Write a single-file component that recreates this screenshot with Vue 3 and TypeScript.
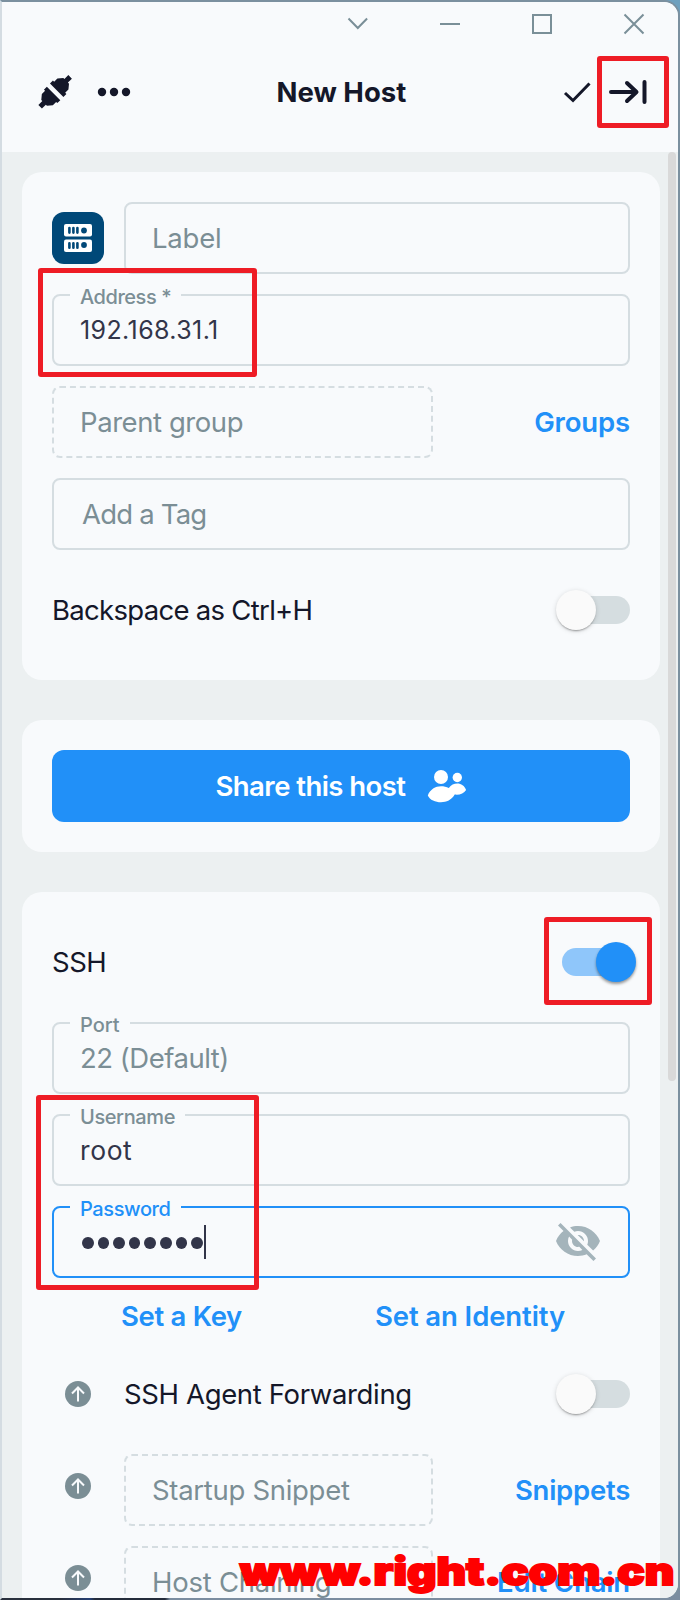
<script setup lang="ts">
interface Mark {
  id: string
}

const marks: Mark[] = [{ id: 'collapse' }, { id: 'address' }, { id: 'ssh' }, { id: 'login' }]
const maskedLength = 8
</script>

<template>
  <div class="desktop">
    <div class="window">
      <header class="header">
        <svg class="controls" width="300" height="24" viewBox="0 0 300 24" fill="none" stroke="#7a8f98" stroke-width="2">
          <path d="M2.500 6.500l9.300 9.500l9.300-9.500" />
          <path d="M94 12h20" />
          <path d="M187 3h18v18h-18z" />
          <path d="M278.500 2.500l19 19M297.500 2.500l-19 19" />
        </svg>
        <div class="toolbar">
          <svg class="plug" width="36" height="36" viewBox="-18 -18 36 36" fill="#141729">
            <g transform="rotate(45)">
              <path d="M-9.500-2.400v-4.200h1.700v-4.600l3.800-4.600h1.500v-5.600h5v5.600h1.500l3.800 4.600v4.600h1.700v4.200z" />
              <path d="M-9.500 2v4.200h1.700v4.600l3.800 4.600h1.500v5.600h5v-5.600h1.500l3.800-4.600v-4.600h1.700v-4.200z" />
            </g>
          </svg>
          <svg class="dots" width="34" height="10" viewBox="0 0 34 10" fill="#141729">
            <circle cx="5" cy="5" r="4.200" /><circle cx="17" cy="5" r="4.200" /><circle cx="29" cy="5" r="4.200" />
          </svg>
          <h1 class="title">New Host</h1>
          <svg class="check" width="28" height="22" viewBox="0 0 28 22" fill="none" stroke="#141729" stroke-width="3">
            <path d="M2 12l8 7.500l16.500-17" />
          </svg>
          <svg class="collapse" width="40" height="28" viewBox="0 0 40 28" fill="none" stroke="#141729" stroke-width="4" stroke-linecap="round" stroke-linejoin="round">
            <path d="M3 14h25M19 5l9.500 9l-9.500 9M36.500 4v20" />
          </svg>
        </div>
      </header>

      <main class="content">
        <section class="card general">
          <div class="row">
            <div class="tile">
              <svg width="28" height="28" viewBox="0 0 28 28">
                <rect width="28" height="12.500" rx="2" fill="#fff" />
                <rect y="15.500" width="28" height="12.500" rx="2" fill="#fff" />
                <path d="M5.400 4v4.600M9.400 4v4.600M13.400 4v4.600M5.400 19.200v4.600M9.400 19.200v4.600M13.400 19.200v4.600" stroke="#004878" stroke-width="2.600" stroke-linecap="round" />
                <circle cx="20" cy="6.500" r="2.900" fill="#004878" /><circle cx="20" cy="21" r="2.900" fill="#004878" />
              </svg>
            </div>
            <div class="field grow hint"><span class="t-label">Label</span></div>
          </div>
          <div class="field value"><span class="legend l-address">Address *</span><span class="t-ip">192.168.31.1</span></div>
          <div class="row between">
            <div class="field dashed parent hint"><span class="t-parent">Parent group</span></div>
            <a class="link k-groups">Groups</a>
          </div>
          <div class="field hint tag"><span class="t-tag">Add a Tag</span></div>
          <div class="row between toggle-row">
            <span class="t-backspace">Backspace as Ctrl+H</span>
            <span class="switch"><i class="knob"></i></span>
          </div>
        </section>

        <section class="card share">
          <button class="button">
            <span class="t-share">Share this host</span>
            <svg width="40" height="36" viewBox="0 0 40 36" fill="#fff">
              <circle cx="14" cy="9" r="7" /><circle cx="30.300" cy="9.500" r="4.700" />
              <path d="M.800 27.500C3 21.500 8.500 18.300 14 18.300c2.800 0 5.500.600 7.800 1.600C24 17 27 15.600 30.300 15.600c3.900 0 7.300 2.300 8.800 6.300c-2.300 3.500-6.500 5.400-11.400 4.700C24.500 32 19.500 34.300 14 34.300C8.500 34.300 2.800 32 .800 27.500z" />
            </svg>
          </button>
        </section>

        <section class="card ssh">
          <div class="row between ssh-row">
            <span class="t-ssh">SSH</span>
            <span class="switch on"><i class="knob"></i></span>
          </div>
          <div class="field hint"><span class="legend l-port">Port</span><span class="t-port">22 (Default)</span></div>
          <div class="field value"><span class="legend l-user">Username</span><span class="t-root">root</span></div>
          <div class="field value active">
            <span class="legend l-pass">Password</span>
            <span class="mask"><i v-for="n in maskedLength" :key="n"></i></span>
            <span class="caret"></span>
            <svg class="eye" width="44" height="44" viewBox="0 2 22 19" fill="#a4b4bb">
              <path d="M11 6c2.760 0 5 2.240 5 5 0 .650-.130 1.260-.360 1.830l2.920 2.920c1.510-1.260 2.700-2.890 3.430-4.750-1.730-4.390-6-7.500-11-7.500-1.400 0-2.740.250-3.980.700l2.160 2.160C9.740 6.130 10.350 6 11 6zM1 3.270l2.280 2.280.460.460C2.080 7.300.780 9.020 0 11c1.730 4.390 6 7.500 11 7.500 1.550 0 3.030-.300 4.380-.840l.420.420L18.730 21 20 19.730 2.270 2 1 3.270zM6.530 8.800l1.550 1.550c-.050.210-.080.430-.080.650 0 1.660 1.340 3 3 3 .220 0 .440-.030.650-.080l1.550 1.550c-.670.330-1.410.530-2.200.530-2.760 0-5-2.240-5-5 0-.790.200-1.530.530-2.200zm4.310-.780l3.150 3.150.020-.160c0-1.660-1.340-3-3-3l-.170.010z" />
            </svg>
          </div>
          <div class="auth-links">
            <a class="link k-key">Set a Key</a>
            <a class="link k-identity">Set an Identity</a>
          </div>
          <div class="row agent">
            <svg class="up" width="26" height="26" viewBox="0 0 26 26" fill="none" stroke="#f8fafc" stroke-width="2"><circle cx="13" cy="13" r="13" fill="#7b8e95" stroke="none" /><path d="M13 20.500V6.500M7 12.500l6-6l6 6" /></svg>
            <span class="t-agent">SSH Agent Forwarding</span>
            <span class="switch"><i class="knob"></i></span>
          </div>
          <div class="row option">
            <svg class="up" width="26" height="26" viewBox="0 0 26 26" fill="none" stroke="#f8fafc" stroke-width="2"><circle cx="13" cy="13" r="13" fill="#7b8e95" stroke="none" /><path d="M13 20.500V6.500M7 12.500l6-6l6 6" /></svg>
            <div class="field dashed small hint"><span class="t-snippet">Startup Snippet</span></div>
            <a class="link k-snippets">Snippets</a>
          </div>
          <div class="row option">
            <svg class="up" width="26" height="26" viewBox="0 0 26 26" fill="none" stroke="#f8fafc" stroke-width="2"><circle cx="13" cy="13" r="13" fill="#7b8e95" stroke="none" /><path d="M13 20.500V6.500M7 12.500l6-6l6 6" /></svg>
            <div class="field dashed small hint"><span class="t-chain">Host Chaining</span></div>
            <a class="link k-chain">Edit Chain</a>
          </div>
        </section>
        <div class="scrollbar"></div>
      </main>
    </div>

    <div v-for="mark in marks" :key="mark.id" class="mark" :class="'mark-' + mark.id"></div>
    <div class="watermark">www.right.com.cn</div>
  </div>
</template>

<style>
body { margin: 0; overflow: hidden; }
</style>

<style scoped>
* { box-sizing: border-box; }
.desktop {
  position: relative; width: 680px; height: 1600px; overflow: hidden;
  background: linear-gradient(#6ea0be 0 50px, transparent 50px), linear-gradient(90deg, #29303d 0 60px, #263f73 90px, #242c3b 95px 165px, #7b8da0 170px);
  font-family: Inter, "Liberation Sans", sans-serif; font-size: 27.5px; line-height: 36px; color: #141729; white-space: nowrap;
}
.window {
  width: 680px; height: 1600px; overflow: hidden; background: #f8fafc;
  border: 2px solid #7b909f; border-left-color: #d4dce2; border-bottom-color: transparent; background-clip: padding-box;
  border-radius: 0 16px 16px 0;
}
.header { height: 150px; background: #f8fafc; }
.header::before { content: ""; display: table; }
.controls { display: block; margin: 10px 0 0 344px; }
.toolbar { display: flex; align-items: center; height: 40px; margin-top: 36px; }
.plug { margin-left: 35px; }
.dots { margin-left: 23.500px; }
.title { margin: 0 auto 0 146px; font-size: 27.5px; line-height: 36px; font-weight: 700; }
.check { margin-right: 17px; flex: none; }
.collapse { flex: none; margin-right: 30px; }
.content { position: relative; height: 1446px; background: #ecf0f1; padding: 20px 18px 0 20px; overflow: hidden; }
.scrollbar { position: absolute; right: 2px; top: 0; width: 8px; height: 929px; border-radius: 4px; background: #d9d9d9; }
.card { width: 638px; padding: 30px; margin-bottom: 40px; border-radius: 20px; background: #f8fafc; display: flex; flex-direction: column; gap: 20px; }
.general { height: 508px; }
.share { height: 132px; }
.ssh { height: 760px; }
.row { display: flex; align-items: center; }
.between { justify-content: space-between; }
.tile { display: flex; align-items: center; justify-content: center; width: 52px; height: 52px; margin-right: 20px; border-radius: 12px; background: #004878; flex: none; }
.field { position: relative; display: flex; align-items: center; flex: none; height: 72px; padding-left: 26px; border: 2px solid #d5dde1; border-radius: 8px; }
.row .grow { flex: 1; }
.dashed { border-style: dashed; }
.hint { color: #7b8e95; }
.value { color: #323549; font-size: 25px; }
.parent { width: 381px; }
.small { width: 309px; }
.tag { padding-left: 28px; }
.legend { position: absolute; left: 16px; top: -11px; padding: 0 10px; font-size: 20px; line-height: 24px; font-weight: 500; color: #7b8e95; background: #f8fafc; }
.active { border-color: #2190f8; }
.active .legend { color: #2190f8; }
.link { color: #2190f8; font-weight: 600; }
.t-label { letter-spacing: -0.2px; }
.l-address { letter-spacing: -0.45px; }
.t-ip { letter-spacing: 0.4px; }
.t-parent { letter-spacing: -0.43px; }
.k-groups { letter-spacing: -0.15px; }
.t-tag { letter-spacing: -0.8px; }
.t-backspace { letter-spacing: -0.7px; }
.t-share { letter-spacing: -0.55px; }
.t-ssh { letter-spacing: -0.5px; }
.t-port { letter-spacing: -0.5px; }
.l-user, .l-pass { letter-spacing: -0.4px; }
.t-root { font-size: 26.500px; letter-spacing: 0.6px; }
.k-key { letter-spacing: -0.3px; }
.k-identity { letter-spacing: -0.1px; }
.t-agent { letter-spacing: -0.36px; }
.t-snippet { letter-spacing: -0.3px; }
.k-snippets { letter-spacing: -0.25px; }
.t-chain { letter-spacing: -0.25px; }
.k-chain { letter-spacing: -0.15px; }
.toggle-row { height: 80px; }
.switch { position: relative; width: 68px; height: 28px; border-radius: 14px; background: #d5dde0; flex: none; }
.knob { position: absolute; left: -6px; top: -6px; width: 40px; height: 40px; border-radius: 50%; background: #fafafa; box-shadow: 0 2px 2px -1px rgba(0,0,0,.35), 0 1px 5px rgba(0,0,0,.15); }
.on { background: #8fc6fa; }
.on .knob { left: 34px; background: #2190f8; box-shadow: 0 2px 3px rgba(0,0,0,.4); }
.button { display: flex; align-items: center; justify-content: center; gap: 21px; width: 578px; height: 72px; padding: 0; border: 0; border-radius: 12px; background: #2190f8; color: #fff; font: inherit; font-weight: 600; }
.ssh-row { height: 80px; }
.mask { display: flex; gap: 4px; margin: 1px 0 0 2px; }
.mask i { width: 11.600px; height: 12px; border-radius: 50%; background: #323549; }
.caret { width: 2px; height: 34px; margin-left: 1px; background: #323549; }
.eye { position: absolute; right: 28px; top: 12px; }
.auth-links { height: 36px; display: flex; padding-left: 69px; }
.k-identity { margin-left: 133px; }
.agent { height: 40px; margin-top: 20px; }
.up { margin-left: 13px; margin-right: 33px; flex: none; }
.agent .switch, .option .link { margin-left: auto; }
.agent + .option { margin-top: 20px; }
.option { height: 72px; flex: none; }
.option .up { align-self: flex-start; margin-top: 19px; }
.mark { position: absolute; border: 5px solid #ee1c25; border-radius: 3px; }
.mark-collapse { left: 597px; top: 56px; width: 71.500px; height: 72px; }
.mark-address { left: 38px; top: 268px; width: 218.500px; height: 109px; }
.mark-ssh { left: 544px; top: 917px; width: 107.500px; height: 88px; }
.mark-login { left: 36px; top: 1095px; width: 222.500px; height: 194.500px; }
.watermark { position: absolute; left: 240px; top: 1549px; font-size: 38px; line-height: 44px; font-weight: 900; color: #f00; -webkit-text-stroke: 2px #f00; transform: scaleX(1.2); transform-origin: left; }
</style>
